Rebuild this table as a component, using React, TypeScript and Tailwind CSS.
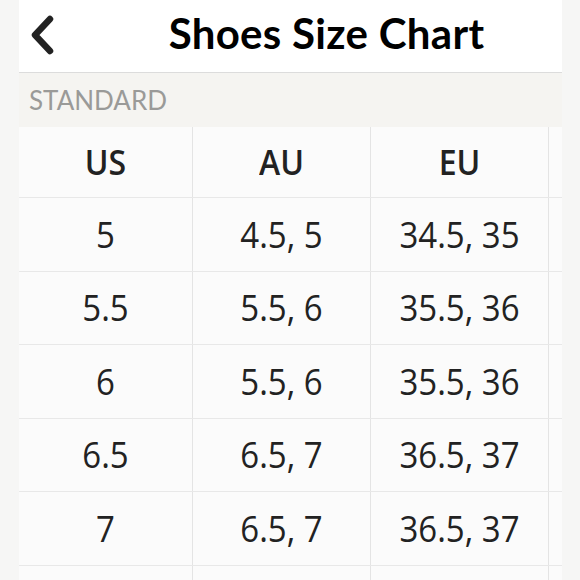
import React from "react";

const rows = [
  ["5", "4.5, 5", "34.5, 35"],
  ["5.5", "5.5, 6", "35.5, 36"],
  ["6", "5.5, 6", "35.5, 36"],
  ["6.5", "6.5, 7", "36.5, 37"],
  ["7", "6.5, 7", "36.5, 37"],
];

const tableFont = { fontFamily: "'Open Sans', sans-serif" };

function Cell({ children, head }: { children?: React.ReactNode; head?: boolean }) {
  return (
    <div className="flex items-center justify-center border-r border-[#e4e4e4]">
      <span className={head ? "inline-block scale-y-[1.08] font-semibold" : "inline-block scale-y-[1.1]"}>{children}</span>
    </div>
  );
}

export default function App() {
  return (
    <div className="w-[580px] h-[580px] overflow-hidden bg-[#f6f6f5] flex justify-center">
      <div className="w-[543px] ml-[1px] flex flex-col">
        <div className="shrink-0 h-[73px] bg-white border-b border-[#dcdcdc] flex items-center relative">
          <svg className="absolute left-[11px] top-[15px]" width="26" height="40" viewBox="0 0 26 40">
            <polyline points="20,4 5,20 20,36" fill="none" stroke="#222" strokeWidth="6.5" strokeLinecap="round" strokeLinejoin="round" />
          </svg>
          <div className="w-full text-center pl-[72px] text-[42px] font-bold text-black tracking-[0.3px] leading-none pb-[6px]" style={{ fontFamily: "Lato, sans-serif" }}>
            Shoes Size Chart
          </div>
        </div>
        <div className="shrink-0 h-[54px] bg-[#f5f4f1] flex items-center pl-[10px] text-[26px] text-[#9a9a98]" style={{ fontFamily: "Lato, sans-serif" }}>
          STANDARD
        </div>
        <div className="bg-[#fbfbfb] flex-1" style={tableFont}>
          <div className="grid grid-cols-[174px_178px_178px_13px] h-[71px] border-b border-[#e8e8e8] text-[32px] text-[#222]">
            <Cell head>US</Cell>
            <Cell head>AU</Cell>
            <Cell head>EU</Cell>
            <div></div>
          </div>
          {rows.map((r, i) => (
            <div key={i} className="grid grid-cols-[174px_178px_178px_13px] h-[73.5px] border-b border-[#e8e8e8] text-[33px] text-[#222]">
              <Cell>{r[0]}</Cell>
              <Cell>{r[1]}</Cell>
              <Cell>{r[2]}</Cell>
              <div></div>
            </div>
          ))}
          <div className="grid grid-cols-[174px_178px_178px_13px] h-[20px]">
            <div className="border-r border-[#e4e4e4]"></div>
            <div className="border-r border-[#e4e4e4]"></div>
            <div className="border-r border-[#e4e4e4]"></div>
            <div></div>
          </div>
        </div>
      </div>
    </div>
  );
}
